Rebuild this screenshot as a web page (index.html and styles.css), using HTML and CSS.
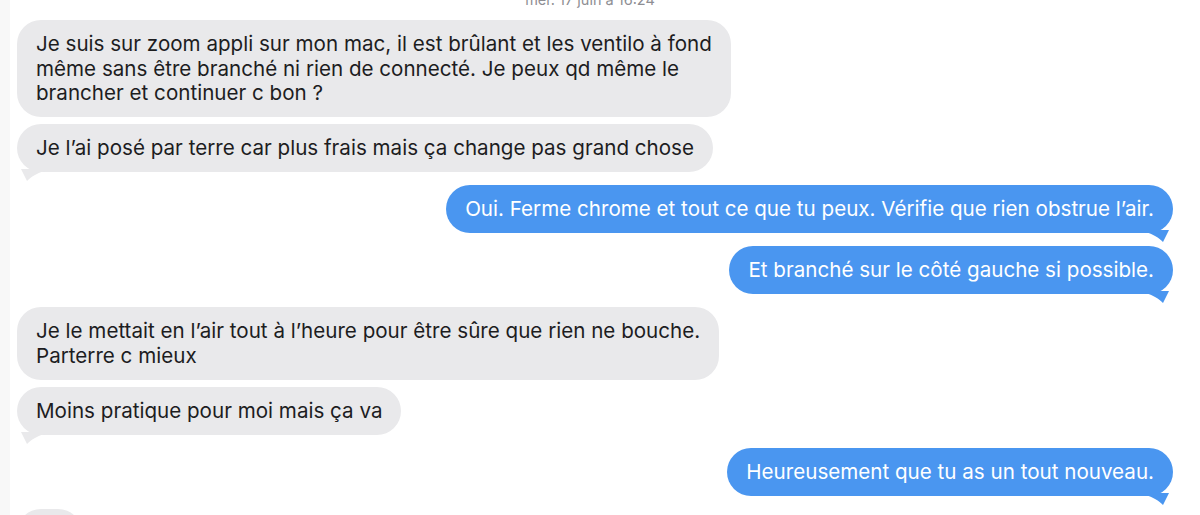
FILE: index.html
```html
<!DOCTYPE html>
<html lang="fr">
<head>
<meta charset="utf-8">
<title>Messages</title>
<link rel="stylesheet" href="styles.css">
</head>
<body>
<div class="app">
  <div class="edge"></div>
  <main class="thread">
    <div class="stamp">mer. 17 juin à 16:24</div>
    <div class="msg them">Je suis sur zoom appli sur mon mac, il est brûlant et les ventilo à fond<br>même sans être branché ni rien de connecté. Je peux qd même le<br>brancher et continuer c bon ?</div>
    <div class="msg them tail">Je l’ai posé par terre car plus frais mais ça change pas grand chose<svg class="t" viewBox="0 0 24 12"><path d="M0 0 C2 4 4 8 6 12 C10 8 16 4 24 2 L24 0 Z"/></svg></div>
    <div class="msg me tail">Oui. Ferme chrome et tout ce que tu peux. Vérifie que rien obstrue l’air.<svg class="t" viewBox="0 0 24 12"><path d="M24 0 C22 4 20 8 18 12 C14 8 8 4 0 2 L0 0 Z"/></svg></div>
    <div class="msg me tail">Et branché sur le côté gauche si possible.<svg class="t" viewBox="0 0 24 12"><path d="M24 0 C22 4 20 8 18 12 C14 8 8 4 0 2 L0 0 Z"/></svg></div>
    <div class="msg them">Je le mettait en l’air tout à l’heure pour être sûre que rien ne bouche.<br>Parterre c mieux</div>
    <div class="msg them tail">Moins pratique pour moi mais ça va<svg class="t" viewBox="0 0 24 12"><path d="M0 0 C2 4 4 8 6 12 C10 8 16 4 24 2 L24 0 Z"/></svg></div>
    <div class="msg me tail">Heureusement que tu as un tout nouveau.<svg class="t" viewBox="0 0 24 12"><path d="M24 0 C22 4 20 8 18 12 C14 8 8 4 0 2 L0 0 Z"/></svg></div>
    <div class="msg them">Ok</div>
  </main>
</div>
</body>
</html>
```
FILE: styles.css
```css
html, body {
  margin: 0;
  padding: 0;
  background: #ffffff;
  overflow: hidden;
}
.app {
  display: flex;
  width: 1200px;
  height: 515px;
  overflow: hidden;
}
.edge {
  width: 10px;
  flex: none;
  background: #f8f8f8;
}
.thread {
  flex: 1;
  display: flex;
  flex-direction: column;
  align-items: flex-start;
  gap: 7px;
  padding: 0 27px 0 7px;
  font-family: Inter, "Liberation Sans", sans-serif;
}
.stamp {
  align-self: center;
  margin: -8px 0 5px;
  font-size: 14.5px;
  line-height: 16px;
  color: #8e8e93;
  transform: translateX(-5px);
}
.msg {
  position: relative;
  box-sizing: border-box;
  padding: 12px 19px 11.5px;
  font-size: 20.6px;
  line-height: 24.5px;
  border-radius: 24px;
  letter-spacing: 0;
}
.them {
  background: #e9e9eb;
  color: #1d1d1f;
}
.me {
  align-self: flex-end;
  background: #4a96f0;
  color: #ffffff;
}
.tail {
  margin-bottom: 6px;
}
.t {
  position: absolute;
  width: 24px;
  height: 12px;
  bottom: -9px;
}
.them .t {
  left: 4px;
  fill: #e9e9eb;
}
.me .t {
  right: 4px;
  fill: #4a96f0;
}
```
